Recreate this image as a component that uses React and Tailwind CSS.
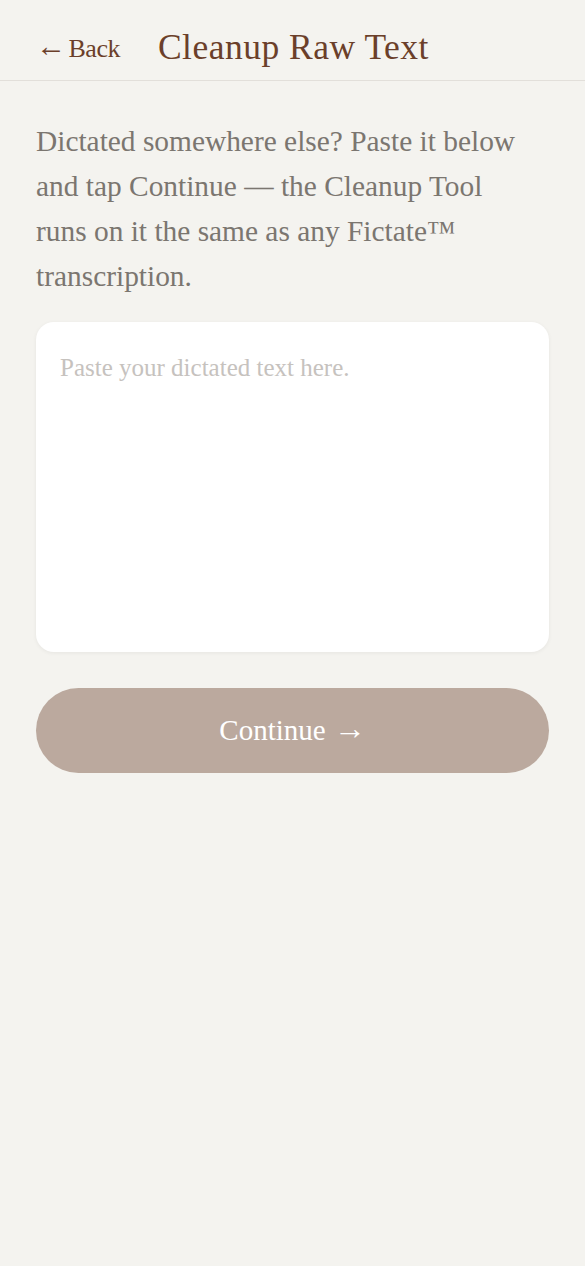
import React from "react";

export default function App() {
  const serif = { fontFamily: '"Liberation Serif", "DejaVu Serif", serif' };
  return (
    <div className="min-h-[1266px] w-full bg-[#f4f3ef]" style={serif}>
      <header className="flex h-[81px] items-center border-b border-[#e2dfda] px-[36px] pt-[16px]">
        <button className="flex items-center text-[26px] tracking-[-0.5px] text-[#6b3f2a]">
          <span className="mr-[3px] inline-block -translate-y-[2px] text-[30px] leading-none">←</span>Back
        </button>
        <h1 className="ml-[38px] text-[35.5px] tracking-[0.5px] text-[#6b3f2a]">Cleanup Raw Text</h1>
      </header>
      <main className="px-[36px] pt-[38px]">
        <p className="text-[29.4px] leading-[45px] text-[#7b7670]">
          Dictated somewhere else? Paste it below<br />
          and tap Continue — the Cleanup Tool<br />
          runs on it the same as any Fictate™<br />
          transcription.
        </p>
        <div className="mt-[23px] h-[330px] rounded-[18px] bg-white shadow-[0_1px_4px_rgba(0,0,0,0.06)]">
          <textarea
            className="h-full w-full resize-none rounded-[18px] bg-transparent px-[24px] pt-[30px] text-[25px] leading-[32px] text-[#4a3a30] outline-none placeholder:text-[#c6c2be]"
            style={serif}
            placeholder="Paste your dictated text here."
          />
        </div>
        <button className="mt-[36px] flex h-[85px] w-full items-center justify-center rounded-full bg-[#bba99e] text-[29px] text-white">
          Continue <span className="ml-[8px] inline-block -translate-y-[3px] text-[32px] leading-none">→</span>
        </button>
      </main>
    </div>
  );
}
